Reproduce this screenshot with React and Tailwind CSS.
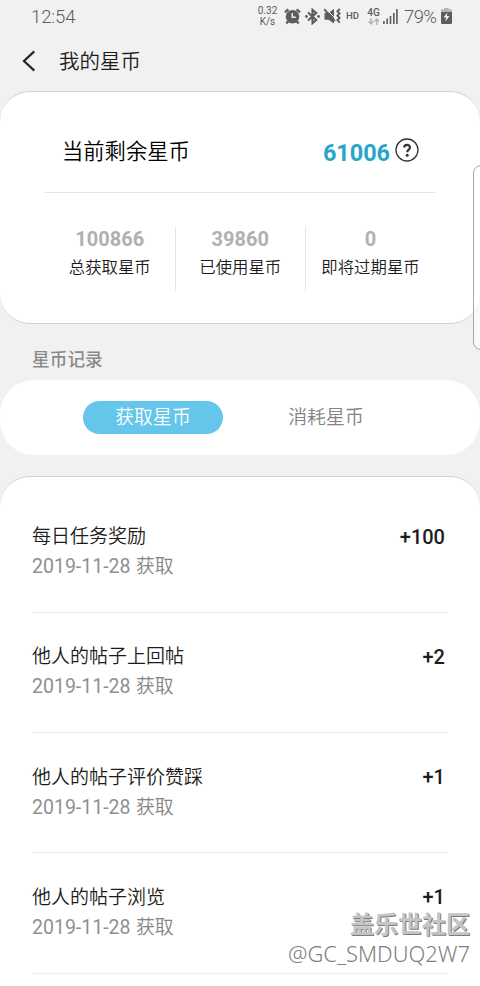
import { useState } from "react";

const stats = [
  { value: "100866", label: "总获取星币" },
  { value: "39860", label: "已使用星币" },
  { value: "0", label: "即将过期星币" },
];

const records = [
  { id: 1, title: "每日任务奖励", date: "2019-11-28", amount: "+100" },
  { id: 2, title: "他人的帖子上回帖", date: "2019-11-28", amount: "+2" },
  { id: 3, title: "他人的帖子评价赞踩", date: "2019-11-28", amount: "+1" },
  { id: 4, title: "他人的帖子浏览", date: "2019-11-28", amount: "+1" },
];

function AlarmIcon() {
  return (
    <svg width="17" height="17" viewBox="0 0 17 17" className="shrink-0">
      <circle cx="8.5" cy="8.7" r="6.8" fill="#5c5c5c" />
      <path d="M1 4.4 4.4 1.4M16 4.4 12.6 1.4M4 13.5 2.4 15.6M13 13.5l1.6 2.1" stroke="#5c5c5c" strokeWidth="2.4" />
      <path d="M8.3 5v4.2h3.4" fill="none" stroke="#f1f1f1" strokeWidth="1.4" />
    </svg>
  );
}

function BluetoothIcon() {
  return (
    <svg width="15" height="17" viewBox="0 0 15 17" className="shrink-0">
      <path d="M3 4.5l8.2 7.5-3.7 3.2V1.8l3.7 3.2L3 12.5" fill="none" stroke="#5c5c5c" strokeWidth="2.1" />
      <circle cx="1.5" cy="8.5" r="1.4" fill="#5c5c5c" />
      <circle cx="13.5" cy="8.5" r="1.4" fill="#5c5c5c" />
    </svg>
  );
}

function MuteVibrateIcon() {
  return (
    <svg width="17" height="17" viewBox="0 0 17 17" className="shrink-0">
      <path d="M.5 4.8h4L10 1v14.5L4.5 11.8h-4z" fill="#5c5c5c" />
      <path d="M2.4 1.2 11 10.2" stroke="#f1f1f1" strokeWidth="1" />
      <path d="M.2 1.2 11 13" stroke="#5c5c5c" strokeWidth="1.8" />
      <path d="M15.8 1l-2.4 2.3 2.2 2.2-2.2 2.2 2.2 2.2-2.2 2.2 2.4 2.5" fill="none" stroke="#5c5c5c" strokeWidth="1.9" />
    </svg>
  );
}

function DataArrowsIcon() {
  return (
    <svg width="12" height="7" viewBox="0 0 12 7">
      <path d="M3 0v5.5M.7 3.2 3 5.8l2.3-2.6M8.8 7V1.2M6.5 3.6 8.8 1l2.3 2.6" fill="none" stroke="#b4b4b4" strokeWidth="1.5" />
    </svg>
  );
}

function SignalIcon() {
  return (
    <svg width="15" height="15" viewBox="0 0 15 15" className="shrink-0">
      <path d="M.9 12v3M4.2 9.5V15M7.5 7v8M10.8 4v11M13.9 0v15" stroke="#5c5c5c" strokeWidth="1.6" />
    </svg>
  );
}

function BatteryIcon() {
  return (
    <svg width="11" height="16" viewBox="0 0 11 16" className="shrink-0">
      <path d="M3.2 0h4.6v1.6H11V4H0V1.6h3.2z" fill="#b4b4b4" />
      <path d="M0 4h11v10.8a1.2 1.2 0 0 1-1.2 1.2H1.2A1.2 1.2 0 0 1 0 14.8z" fill="#5c5c5c" />
      <path d="M6.4 4.4 2.5 9.6h2.7l-.8 4 4.1-5.500H5.800z" fill="#f1f1f1" />
    </svg>
  );
}

function StatusBar() {
  return (
    <div className="flex h-8 items-center pr-7 pl-[31px] text-[#5c5c5c]">
      <span className="pt-[3px] text-[18.5px] font-light tracking-[-0.1px]">12:54</span>
      <div className="ml-auto flex items-center">
        <div className="mr-[6px] flex w-[21px] flex-col items-center text-[10px] leading-[11px]">
          <span>0.32</span>
          <span>K/s</span>
        </div>
        <AlarmIcon />
        <span className="w-1" />
        <BluetoothIcon />
        <span className="w-1" />
        <MuteVibrateIcon />
        <span className="ml-[5px] w-[14px] text-[9.5px] font-medium">HD</span>
        <div className="mr-[3px] ml-[7px] flex w-[13px] flex-col items-center gap-px">
          <span className="text-[10px] leading-[9px] font-medium">4G</span>
          <DataArrowsIcon />
        </div>
        <SignalIcon />
        <span className="mr-1 ml-[6px] w-[33px] pt-[3px] text-[18.5px] font-light tracking-[-0.6px]">79%</span>
        <BatteryIcon />
      </div>
    </div>
  );
}

export default function App() {
  const [tab, setTab] = useState("earn");

  const tabClass = (name) =>
    tab === name
      ? "bg-[#63c6ea] text-white"
      : "text-[#848484]";

  return (
    <div className="relative h-[986px] w-[480px] overflow-hidden bg-[#f1f1f1] font-[Roboto,'Noto_Sans_CJK_SC',sans-serif] text-[#1c1c1c]">
      <StatusBar />

      <header className="flex h-[59px] items-center pl-[22px]">
        <svg width="14" height="22" viewBox="0 0 14 22" className="-mt-px">
          <path d="M12.3 1.4 2 11l10.3 9.6" fill="none" stroke="#252525" strokeWidth="2.2" />
        </svg>
        <h1 className="ml-[23px] pt-px text-[20.5px] font-[350]">我的星币</h1>
      </header>

      {/* 星币余额 */}
      <section className="h-[233px] rounded-[30px] border-y border-[#d2d2d2] bg-white px-[45px]">
        <div className="flex h-[101px] items-center border-b border-[#e4e4e4] pt-[20px] pr-4 pl-[17px]">
          <span className="text-[21.3px] font-[350] text-black">当前剩余星币</span>
          <span className="ml-auto pt-[3px] text-[23.4px] font-bold text-[#28a5c8]">61006</span>
          <svg width="24" height="24" viewBox="0 0 24 24" className="mb-1 ml-[5px]">
            <circle cx="12" cy="12" r="11" fill="none" stroke="#333" strokeWidth="1.3" />
            <path d="M9.2 9.6c0-3.6 5.8-3.5 5.8-.2 0 2.3-2.8 2.2-2.8 4.8" fill="none" stroke="#333" strokeWidth="2.2" />
            <circle cx="12.2" cy="17.3" r="1.5" fill="#333" />
          </svg>
        </div>
        <div className="flex pt-[34px]">
          {stats.map((item) => (
            <div key={item.label} className="flex h-16 w-[130.5px] shrink-0 flex-col items-center border-r border-[#e4e4e4] last:w-[129px] last:border-r-0">
              <span className="h-[29px] text-[20px] leading-[24px] font-bold text-[#b0b0b0]">{item.value}</span>
              <span className="text-[16.4px] leading-[24px] font-[350] whitespace-nowrap">{item.label}</span>
            </div>
          ))}
        </div>
      </section>

      <h2 className="flex h-14 items-center pt-[17px] pl-8 text-[17.7px] font-medium text-[#8a8a8a]">星币记录</h2>

      {/* 获取 / 消耗 切换 */}
      <div className="flex h-[75px] items-center gap-[33px] rounded-[34px] bg-white pl-[83px]">
        <button onClick={() => setTab("earn")} className={`h-[33px] w-[140px] rounded-full text-[18.9px] leading-[33px] font-[350] ${tabClass("earn")}`}>
          获取星币
        </button>
        <button onClick={() => setTab("spend")} className={`h-[33px] w-[140px] rounded-full text-[18.9px] leading-[33px] font-[350] ${tabClass("spend")}`}>
          消耗星币
        </button>
      </div>

      {/* 记录列表 */}
      <section className="mt-[21px] h-[540px] rounded-t-[30px] border-t border-[#d2d2d2] bg-white px-8 pt-[15.6px]">
        {records.map((item) => (
          <div key={item.id} className="flex h-[120.3px] justify-between border-b border-[#ececec] pt-[29px] pr-[3px]">
            <div className="flex flex-col pt-[0.5px] font-[350]">
              <span className="text-[19px] leading-[30px]">{item.title}</span>
              <span className="text-[18.8px] leading-[30px] text-[#848484]">
                <span className="mr-px text-[19.5px] font-normal text-[#909090]">{item.date}</span> 获取
              </span>
            </div>
            <span className="text-[20px] leading-[30px] font-medium">{item.amount}</span>
          </div>
        ))}
      </section>

      {/* 侧边栏把手 */}
      <div className="absolute top-[165px] -right-3 h-[185px] w-[19px] rounded-lg border border-[#a8a8a8] bg-white/60" />

      {/* 水印 */}
      <div className="absolute right-[10px] bottom-[17px] flex flex-col items-end font-['Noto_Sans','Noto_Sans_CJK_SC',sans-serif]">
        <span className="text-[24px] leading-[30px] font-bold text-[#c4c4c4] [text-shadow:1px_1px_0_#7c7c7c]">盖乐世社区</span>
        <span className="text-[21.9px] leading-[30px] font-light text-[#808080]">@GC_SMDUQ2W7</span>
      </div>
    </div>
  );
}
